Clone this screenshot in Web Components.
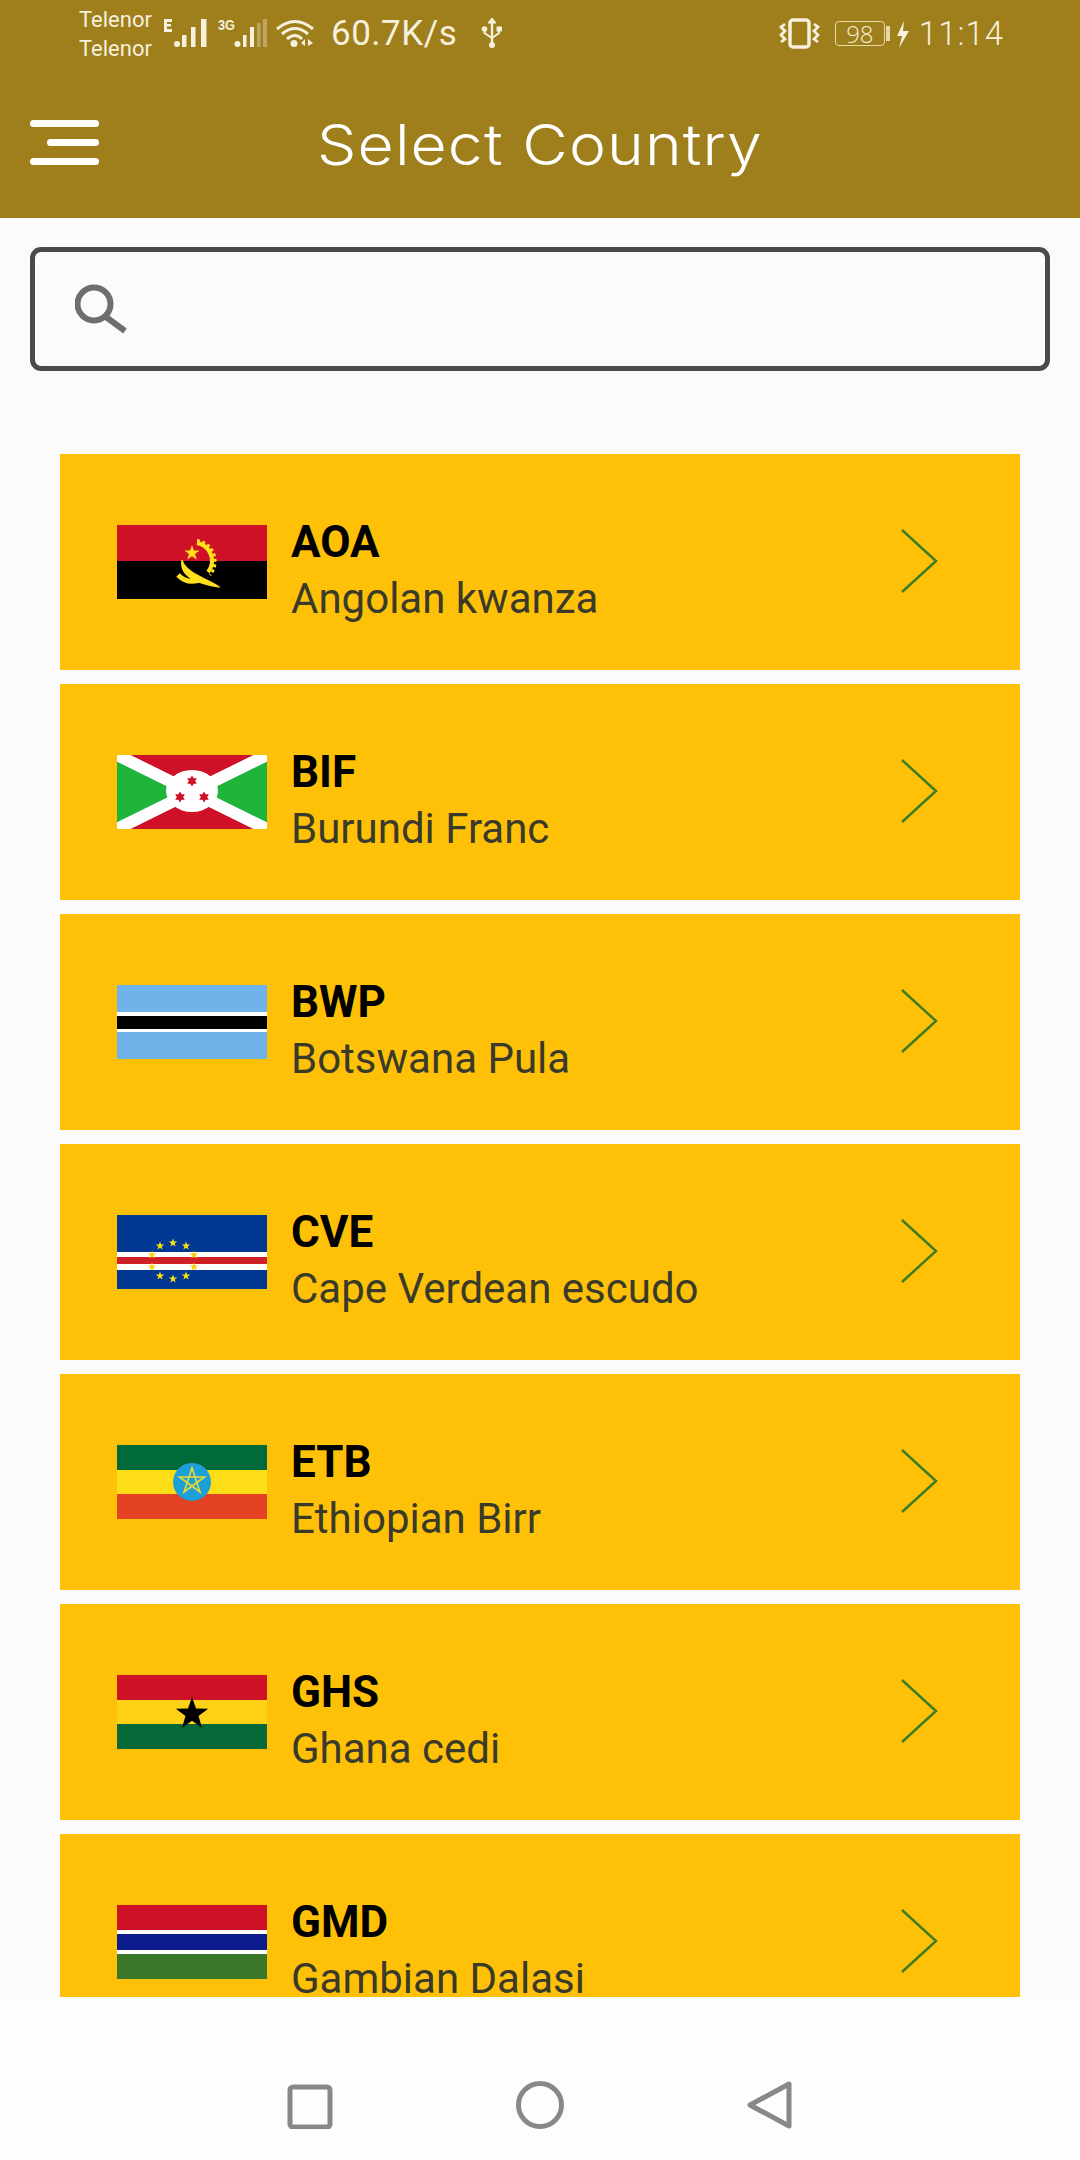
<!DOCTYPE html>
<html lang="en">
<head>
<meta charset="utf-8">
<title>Select Country</title>
<style>
    html, body { margin: 0; padding: 0; background: #fbfbfb; }
</style>
</head>
<body>
<app-screen>
    <status-bar slot="top"></status-bar>
    <app-header slot="top" title="Select Country"></app-header>
    <search-box slot="top"></search-box>
    <currency-card code="AOA" name="Angolan kwanza"></currency-card>
    <currency-card code="BIF" name="Burundi Franc"></currency-card>
    <currency-card code="BWP" name="Botswana Pula"></currency-card>
    <currency-card code="CVE" name="Cape Verdean escudo"></currency-card>
    <currency-card code="ETB" name="Ethiopian Birr"></currency-card>
    <currency-card code="GHS" name="Ghana cedi"></currency-card>
    <currency-card code="GMD" name="Gambian Dalasi"></currency-card>
    <nav-bar slot="bottom"></nav-bar>
</app-screen>
<script>
const star = (cx, cy, r, fill) => {
    let pts = [];
    for (let i = 0; i < 10; i++) {
        const rad = i % 2 ? r * 0.4 : r;
        const a = -Math.PI / 2 + i * Math.PI / 5;
        pts.push((cx + rad * Math.cos(a)).toFixed(1) + "," + (cy + rad * Math.sin(a)).toFixed(1));
    }
    return `<polygon points="${pts.join(" ")}" fill="${fill}"/>`;
};

const hexStar = (cx, cy, r) => `
    <polygon points="${cx},${cy - r} ${cx + r * 0.87},${cy + r * 0.5} ${cx - r * 0.87},${cy + r * 0.5}" fill="#ce1126"/>
    <polygon points="${cx},${cy + r} ${cx + r * 0.87},${cy - r * 0.5} ${cx - r * 0.87},${cy - r * 0.5}" fill="#ce1126"/>`;

const FLAGS = {
    AOA: `<rect width="150" height="36" fill="#ce1126"/>
        <rect y="36" width="150" height="38" fill="#000"/>
        <path d="M80 18 A18 18 0 0 1 91 47" fill="none" stroke="#ffe01a" stroke-width="4"/>
        <path d="M80 15.500 A21 21 0 0 1 93 50" fill="none" stroke="#ffe01a" stroke-width="3" stroke-dasharray="3 2.500"/>
        ${star(75, 28, 8, "#ffe01a")}
        <path d="M65 35 C67 46 84 52 103 62 C88 60 62 54 65 35 Z" fill="#ffe01a" stroke="#ffe01a" stroke-width="1.500"/>
        <path d="M84 45 L103 62" stroke="#000" stroke-width="0.800"/>
        <path d="M61 50 C68 57 76 58 85 54" fill="none" stroke="#ffe01a" stroke-width="5"/>`,
    BIF: `<rect width="150" height="74" fill="#ce1126"/>
        <polygon points="0,0 75,37 0,74" fill="#1eb53a"/>
        <polygon points="150,0 75,37 150,74" fill="#1eb53a"/>
        <path d="M0 0 L150 74 M150 0 L0 74" stroke="#fff" stroke-width="12"/>
        <ellipse cx="75" cy="36" rx="26" ry="21" fill="#fff"/>
        ${hexStar(75, 26, 5.500)}${hexStar(63, 42, 5.500)}${hexStar(87, 42, 5.500)}`,
    BWP: `<rect width="150" height="74" fill="#6fb3ea"/>
        <rect y="27" width="150" height="20" fill="#fff"/>
        <rect y="31" width="150" height="13" fill="#000"/>`,
    CVE: `<rect width="150" height="74" fill="#003893"/>
        <rect y="37" width="150" height="18" fill="#fff"/>
        <rect y="42" width="150" height="7" fill="#cf2027"/>
        ${star(43, 31, 4.500, "#f7e116")}${star(56, 28, 4.500, "#f7e116")}${star(69, 31, 4.500, "#f7e116")}
        ${star(35, 40, 4.500, "#f7d116")}${star(77, 40, 4.500, "#f7d116")}
        ${star(35, 52, 4.500, "#f7d116")}${star(77, 52, 4.500, "#f7d116")}
        ${star(43, 61, 4.500, "#f7e116")}${star(56, 64, 4.500, "#f7e116")}${star(69, 61, 4.500, "#f7e116")}`,
    ETB: `<rect width="150" height="25" fill="#006a3a"/>
        <rect y="25" width="150" height="24" fill="#fcdd16"/>
        <rect y="49" width="150" height="25" fill="#e54125"/>
        <circle cx="75" cy="37" r="19" fill="#1e9fd8"/>
        <polygon points="75,23 83,47 62.500,32 87.500,32 67,47" fill="none" stroke="#e8dc30" stroke-width="1.600"/>`,
    GHS: `<rect width="150" height="25" fill="#ce1126"/>
        <rect y="25" width="150" height="24" fill="#fcd116"/>
        <rect y="49" width="150" height="25" fill="#05693a"/>
        ${star(75, 39, 17, "#000")}`,
    GMD: `<rect width="150" height="25" fill="#ce1126"/>
        <rect y="25" width="150" height="24" fill="#fff"/>
        <rect y="29" width="150" height="16" fill="#0c1c8c"/>
        <rect y="49" width="150" height="25" fill="#3a7728"/>`
};

class AppScreen extends HTMLElement {
    constructor() {
        super();
        this.attachShadow({mode: "open"});
        this.shadowRoot.innerHTML = `<style>
            :host { display: flex; flex-direction: column; width: 1080px; height: 2160px; overflow: hidden; background: #fbfbfb; }
            .list { display: flex; flex-direction: column; gap: 14px; margin: 83px 60px 0; height: 1543px; overflow: hidden; flex: none; }
            .bottom { display: block; flex: 1; }
        </style>
        <slot name="top"></slot>
        <div class="list"><slot></slot></div>
        <div class="bottom"><slot name="bottom"></slot></div>`;
    }
}

class StatusBar extends HTMLElement {
    constructor() {
        super();
        this.attachShadow({mode: "open"});
        this.shadowRoot.innerHTML = `<style>
            :host { display: flex; align-items: flex-start; height: 70px; background: #9f7e1c; color: #f6f0dc; font-family: Roboto, sans-serif; padding: 0 76px 0 79px; }
            .carrier { font-size: 22px; line-height: 29px; margin-top: 5px; width: 72px; color: #f5efdc; }
            svg { display: block; flex: none; }
            .speed { font-size: 35px; line-height: 40px; margin: 14px 0 0 17px; width: 150px; letter-spacing: 0.500px; }
            .fill { flex: 1; }
            .time { font-size: 33px; line-height: 38px; margin: 15px 0 0 10px; letter-spacing: 1px; font-weight: 300; }
            .batt { width: 50px; height: 25px; margin: 21px 0 0 14px; border: 1px solid #e6d9a8; border-radius: 4px; box-sizing: border-box; font-size: 24px; line-height: 23px; text-align: center; font-family: "Open Sans", sans-serif; font-weight: 300; }
            .small { font-family: "Liberation Sans", sans-serif; font-weight: 700; fill: #f6f0dc; }
        </style>
        <div class="carrier">Telenor<br>Telenor</div>
        <svg width="163" height="70" viewBox="151 0 163 70">
            <g fill="#f6f0dc">
                <rect x="164" y="19" width="8" height="3"/><rect x="164" y="19" width="3" height="13"/><rect x="164" y="24" width="7" height="2.500"/><rect x="164" y="29" width="8" height="3"/>
                <circle cx="177" cy="44" r="3"/><rect x="182" y="35" width="4.500" height="12"/><rect x="191" y="27" width="4.500" height="20"/><rect x="201" y="19" width="5.500" height="28"/>
                <circle cx="237.500" cy="44" r="3"/><rect x="243" y="35" width="3.500" height="12"/><rect x="250" y="27" width="4" height="20"/>
                <rect x="257" y="23" width="3.500" height="24" opacity=".35"/>
                <rect x="263" y="19" width="4" height="28" opacity=".35"/>
                <circle cx="294" cy="43.500" r="3.500"/>
                <polygon points="301,43 305,39 305,46"/><polygon points="308,39 313,43 308,46"/>
            </g>
            <text class="small" x="218" y="30" font-size="14" textLength="17" lengthAdjust="spacingAndGlyphs">3G</text>
            <g fill="none" stroke="#f6f0dc" stroke-width="3">
                <path d="M277 29 Q295 14 313 29"/><path d="M282 34 Q295 23 308 34"/><path d="M287 39 Q295 32 302 39"/>
            </g>
        </svg>
        <div class="speed">60.7K/s</div>
        <svg width="22" height="34" viewBox="0 0 22 34" style="margin-top:16px">
            <g fill="#f6f0dc" stroke="#f6f0dc">
                <path d="M11 3 V27" stroke-width="2.400"/><polygon points="7,7 11,2 15,7" stroke-width="1"/>
                <circle cx="11" cy="29" r="3" stroke-width="0"/><circle cx="3.500" cy="13" r="2.800" stroke-width="0"/><rect x="15.500" y="10.500" width="5.500" height="5" stroke-width="0"/>
                <path d="M3.500 14 V17 L11 22 L18 17 V14" fill="none" stroke-width="2"/>
            </g>
        </svg>
        <div class="fill"></div>
        <svg width="42" height="34" viewBox="0 0 42 34" style="margin-top:17px">
            <rect x="11" y="3" width="19" height="27" rx="3" fill="none" stroke="#f6f0dc" stroke-width="3.500"/>
            <path d="M6 7 L2 10 L6 14 L2 18 L6 22 L2 25 M35 7 L39 10 L35 14 L39 18 L35 22 L39 25" fill="none" stroke="#f6f0dc" stroke-width="2.800"/>
        </svg>
        <div class="batt">98</div>
        <svg width="24" height="34" viewBox="2 0 24 34" style="margin-top:18px">
            <rect x="3" y="8" width="4" height="15" fill="#e6d9a8"/>
            <polygon points="21,3 14,18 19,18 16,30 26,13 20,13" fill="#f6f0dc"/>
        </svg>
        <div class="time">11:14</div>`;
    }
}

class AppHeader extends HTMLElement {
    constructor() {
        super();
        this.attachShadow({mode: "open"});
    }
    connectedCallback() {
        this.shadowRoot.innerHTML = `<style>
            :host { display: block; height: 148px; background: #9f7e1c; position: relative; }
            .row { display: flex; align-items: center; justify-content: center; height: 150px; }
            .menu { position: absolute; left: 30px; top: 50px; width: 69px; display: flex; flex-direction: column; align-items: flex-end; gap: 12px; }
            .menu i { display: block; height: 7px; width: 69px; background: #fff; border-radius: 4px; }
            .menu i:nth-child(2) { width: 52px; }
            /* no Montserrat here, Inter stretched comes closest to its wide letters */
            h1 { margin: 0; font: 300 56px/60px Inter, sans-serif; color: #fff; letter-spacing: 1px; transform: scaleX(1.115); }
        </style>
        <div class="menu"><i></i><i></i><i></i></div>
        <div class="row"><h1>${this.getAttribute("title")}</h1></div>`;
    }
}

class SearchBox extends HTMLElement {
    constructor() {
        super();
        this.attachShadow({mode: "open"});
        this.shadowRoot.innerHTML = `<style>
            :host { display: block; margin: 29px 30px 0; height: 124px; box-sizing: border-box; border: 5px solid #4a4a4a; border-radius: 11px; background: #fbfbfb; padding: 32px 0 0 40px; }
            svg { display: block; }
        </style>
        <svg width="54" height="52" viewBox="0 0 54 52">
            <circle cx="19" cy="20" r="16.500" fill="none" stroke="#6e6e6e" stroke-width="6"/>
            <path d="M31 33 L50 47" stroke="#6e6e6e" stroke-width="6"/>
        </svg>`;
    }
}

class CountryFlag extends HTMLElement {
    static get observedAttributes() {
        return ["code"];
    }
    constructor() {
        super();
        this.attachShadow({mode: "open"});
    }
    attributeChangedCallback(atributo, oldValue, newValue) {
        this.shadowRoot.innerHTML = `<style>
            :host { display: block; width: 150px; height: 74px; flex: none; }
            svg { display: block; }
        </style>
        <svg width="150" height="74" viewBox="0 0 150 74">${FLAGS[newValue] || ""}</svg>`;
    }
}

class CurrencyCard extends HTMLElement {
    constructor() {
        super();
        this.attachShadow({mode: "open"});
    }
    connectedCallback() {
        const code = this.getAttribute("code");
        this.shadowRoot.innerHTML = `<style>
            :host { display: flex; flex: none; align-items: center; height: 216px; background: #ffc107; padding-left: 57px; font-family: Roboto, sans-serif; }
            .text { flex: 1; align-self: flex-start; margin-left: 24px; padding-top: 60px; }
            .code { font-weight: 700; font-size: 44px; line-height: 56px; color: #000; }
            .name { font-size: 42px; line-height: 56px; margin-top: 1px; color: #3a3a2a; }
            svg { display: block; flex: none; margin: 0 82px 2px 0; }
        </style>
        <country-flag code="${code}"></country-flag>
        <div class="text">
            <div class="code">${code}</div>
            <div class="name">${this.getAttribute("name")}</div>
        </div>
        <svg width="38" height="66" viewBox="0 0 38 66">
            <path d="M2 2 L36 33 L2 64" fill="none" stroke="#3f7d20" stroke-width="2.500"/>
        </svg>`;
    }
}

class NavBar extends HTMLElement {
    constructor() {
        super();
        this.attachShadow({mode: "open"});
        this.shadowRoot.innerHTML = `<style>
            :host { display: flex; justify-content: center; gap: 183px; height: 163px; background: #fdfdfd; padding-top: 84px; box-sizing: border-box; }
            svg { display: block; flex: none; }
        </style>
        <svg width="46" height="48" viewBox="0 0 46 48">
            <rect x="3" y="6" width="40" height="40" rx="3" fill="none" stroke="#888" stroke-width="5"/>
        </svg>
        <svg width="48" height="48" viewBox="0 0 48 48">
            <circle cx="24" cy="24" r="21.500" fill="none" stroke="#888" stroke-width="5"/>
        </svg>
        <svg width="46" height="48" viewBox="0 0 46 48">
            <path d="M42 3 V45 L3 24 Z" fill="none" stroke="#888" stroke-width="5" stroke-linejoin="round"/>
        </svg>`;
    }
}

customElements.define("app-screen", AppScreen);
customElements.define("status-bar", StatusBar);
customElements.define("app-header", AppHeader);
customElements.define("search-box", SearchBox);
customElements.define("country-flag", CountryFlag);
customElements.define("currency-card", CurrencyCard);
customElements.define("nav-bar", NavBar);
</script>
</body>
</html>
